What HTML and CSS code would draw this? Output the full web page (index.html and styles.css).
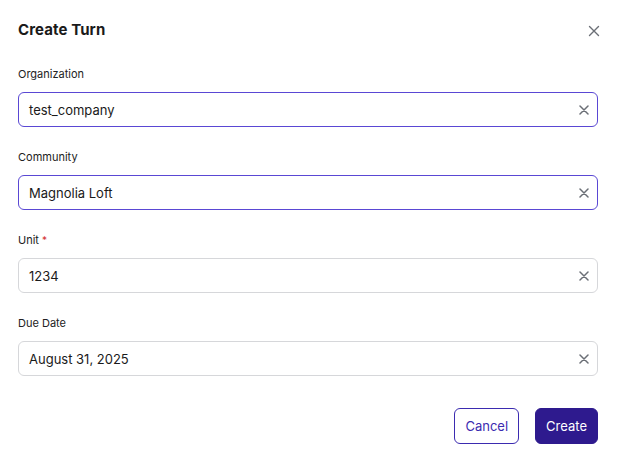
FILE: index.html
```html
<!DOCTYPE html>
<html>
<head>
<meta charset="utf-8">
<link rel="stylesheet" href="styles.css">
</head>
<body>
<div class="dialog">
  <div class="header">
    <h1 class="title">Create Turn</h1>
    <button class="close" aria-label="Close">
      <svg width="12" height="12" viewBox="0 0 12 12"><path d="M1.5 1.5 L10.5 10.5 M10.5 1.5 L1.5 10.5" stroke="#6b6f76" stroke-width="1.4" stroke-linecap="round"/></svg>
    </button>
  </div>
  <div class="fields">
    <div class="field">
      <label class="label">Organization</label>
      <div class="input focused"><span class="value">test_company</span>
        <svg class="clear" width="10" height="10" viewBox="0 0 10 10"><path d="M1 1 L9 9 M9 1 L1 9" stroke="#6b6f76" stroke-width="1.5" stroke-linecap="round"/></svg></div>
    </div>
    <div class="field">
      <label class="label">Community</label>
      <div class="input focused"><span class="value">Magnolia Loft</span>
        <svg class="clear" width="10" height="10" viewBox="0 0 10 10"><path d="M1 1 L9 9 M9 1 L1 9" stroke="#6b6f76" stroke-width="1.5" stroke-linecap="round"/></svg></div>
    </div>
    <div class="field">
      <label class="label">Unit <span class="req">*</span></label>
      <div class="input"><span class="value">1234</span>
        <svg class="clear" width="10" height="10" viewBox="0 0 10 10"><path d="M1 1 L9 9 M9 1 L1 9" stroke="#6b6f76" stroke-width="1.5" stroke-linecap="round"/></svg></div>
    </div>
    <div class="field">
      <label class="label">Due Date</label>
      <div class="input"><span class="value">August 31, 2025</span>
        <svg class="clear" width="10" height="10" viewBox="0 0 10 10"><path d="M1 1 L9 9 M9 1 L1 9" stroke="#6b6f76" stroke-width="1.5" stroke-linecap="round"/></svg></div>
    </div>
  </div>
  <div class="actions">
    <button class="btn btn-outline">Cancel</button>
    <button class="btn btn-primary">Create</button>
  </div>
</div>
</body>
</html>
```

FILE: styles.css
```css
html, body {
  margin: 0;
  padding: 0;
  background: #ffffff;
}
body {
  font-family: Inter, "Liberation Sans", sans-serif;
  color: #1d1d1f;
}
.dialog {
  width: 617px;
  box-sizing: border-box;
  padding: 20px 19px 0 18px;
}
.header {
  display: flex;
  justify-content: space-between;
  align-items: center;
  height: 20px;
}
.title {
  margin: 0;
  font-size: 15px;
  font-weight: 700;
  line-height: 20px;
  letter-spacing: 0.1px;
  color: #1a1a1a;
}
.close {
  border: 0;
  background: none;
  padding: 0;
  margin: 2px -2px 0 0;
  width: 12px;
  height: 12px;
  display: flex;
}
.fields {
  display: flex;
  flex-direction: column;
  gap: 22px;
  margin-top: 26px;
}
.field {
  display: flex;
  flex-direction: column;
  gap: 10px;
}
.label {
  font-size: 11px;
  line-height: 16px;
  color: #222;
}
.req {
  color: #d32f2f;
  font-size: 10px;
  vertical-align: top;
}
.input {
  height: 35px;
  box-sizing: border-box;
  border: 1px solid #d6d7da;
  border-radius: 6px;
  display: flex;
  align-items: center;
  justify-content: space-between;
  padding: 0 9px 0 10px;
}
.input.focused {
  border-color: #5a48d4;
}
.value {
  font-size: 13px;
  color: #1a1a1a;
}
.clear {
  display: block;
  margin-right: -1px;
}
.actions {
  display: flex;
  justify-content: flex-end;
  gap: 16px;
  margin-top: 32px;
}
.btn {
  height: 36px;
  border-radius: 6px;
  font-family: Inter, "Liberation Sans", sans-serif;
  font-size: 13px;
  padding: 0 10px;
  cursor: pointer;
}
.btn-outline {
  background: #ffffff;
  border: 1px solid #3b2bb0;
  color: #3b2bb0;
}
.btn-primary {
  background: #2e1a8e;
  border: 1px solid #2e1a8e;
  color: #ffffff;
}
```
